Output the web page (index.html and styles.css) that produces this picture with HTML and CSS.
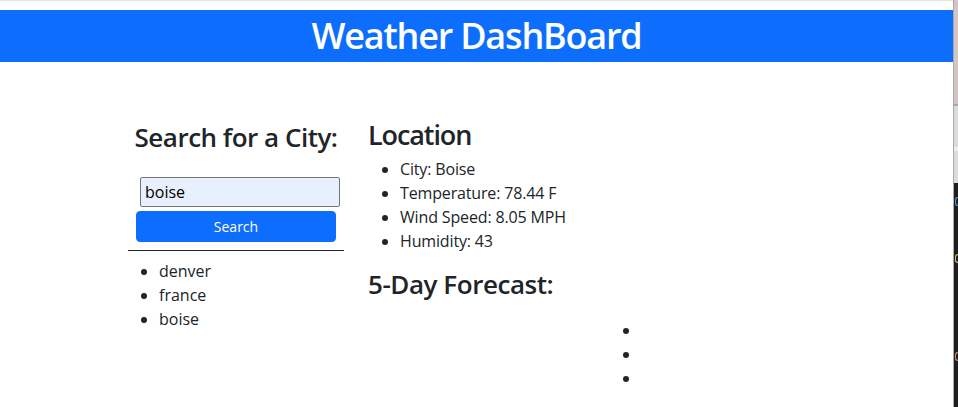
FILE: index.html
```html
<!DOCTYPE html>
<html lang="en">
<head>
<meta charset="utf-8">
<title>Weather DashBoard</title>
<link rel="stylesheet" href="styles.css">
</head>
<body>
<div class="page">
  <header class="banner">
    <h1 class="banner-title">Weather DashBoard</h1>
  </header>
  <main class="container">
    <section class="search-col">
      <h3 class="search-title">Search for a City:</h3>
      <input class="city-input" type="text" value="boise">
      <button class="search-btn" type="button">Search</button>
      <hr class="divider">
      <ul class="history">
        <li>denver</li>
        <li>france</li>
        <li>boise</li>
      </ul>
    </section>
    <section class="weather-col">
      <h2 class="loc-title">Location</h2>
      <ul class="details">
        <li>City: Boise</li>
        <li>Temperature: 78.44 F</li>
        <li>Wind Speed: 8.05 MPH</li>
        <li>Humidity: 43</li>
      </ul>
      <h3 class="forecast-title">5-Day Forecast:</h3>
      <ul class="forecast">
        <li></li>
        <li></li>
        <li></li>
      </ul>
    </section>
  </main>
</div>
<div class="strip">
  <span class="strip-mark m1"></span>
  <span class="strip-mark m2"></span>
  <span class="strip-mark m3"></span>
</div>
</body>
</html>
```
FILE: styles.css
```css
html, body {
  margin: 0;
  padding: 0;
  height: 100%;
}
body {
  display: flex;
  background: #fff;
  color: #212529;
  font-family: "Open Sans", "Noto Sans", sans-serif;
  font-size: 16px;
  line-height: 24px;
  overflow: hidden;
}
.page {
  flex: 1;
  min-width: 0;
  border-top: 1px solid #e2e2e2;
  padding-top: 9px;
}
.banner {
  background: #0d6efd;
  height: 52px;
  display: flex;
  align-items: center;
  justify-content: center;
}
.banner-title {
  margin: 0;
  color: #fff;
  font-size: 36px;
  font-weight: 600;
  line-height: 52px;
  letter-spacing: -1.2px;
}
.container {
  display: flex;
  gap: 25px;
  padding: 56px 0 0 128px;
}
.search-col {
  width: 216px;
  display: flex;
  flex-direction: column;
  align-items: center;
}
.search-title {
  margin: 3px 0 24px;
  font-size: 26px;
  font-weight: 600;
  line-height: 32px;
  letter-spacing: -0.5px;
  white-space: nowrap;
}
.city-input {
  box-sizing: border-box;
  width: 200px;
  height: 30px;
  margin: 0 0 0 8px;
  padding: 1px 4px;
  border: 1px solid #767676;
  border-radius: 2px;
  background: #e8f0fe;
  font-family: inherit;
  font-size: 16px;
  color: #000;
  outline: none;
}
.search-btn {
  box-sizing: border-box;
  width: 200px;
  height: 31px;
  margin-top: 4px;
  border: 1px solid #0d6efd;
  border-radius: 4px;
  background: #0d6efd;
  color: #fff;
  font-family: inherit;
  font-size: 14px;
  line-height: 21px;
  padding: 4px 8px;
}
.divider {
  align-self: stretch;
  margin: 8px 0 0;
  border: 0;
  border-top: 1px solid #212529;
  height: 0;
}
.history {
  align-self: stretch;
  margin: 8px 0 0;
  padding-left: 31px;
}
.weather-col {
  flex: 1;
}
.loc-title {
  margin: 0 0 5px -1px;
  font-size: 27px;
  font-weight: 600;
  line-height: 34px;
  letter-spacing: -1.1px;
}
.details {
  margin: 0;
  padding-left: 31px;
  letter-spacing: -0.15px;
}
.forecast-title {
  margin: 15px 0 0 -1px;
  font-size: 26px;
  font-weight: 600;
  line-height: 32px;
  letter-spacing: -0.45px;
}
.forecast {
  margin: 18px 0 0 240px;
  padding-left: 32px;
}
.forecast li {
  height: 24px;
}
.strip {
  position: relative;
  width: 5px;
  flex: none;
  border-left: 1px solid #a9a9a9;
  box-sizing: border-box;
  background: linear-gradient(to bottom,
    #d3c5c5 0, #d3c5c5 104px,
    #a8a8a8 104px, #a8a8a8 106px,
    #dcdcde 106px, #dcdcde 147px,
    #eeeeee 147px, #eeeeee 151px,
    #dcdcde 151px, #dcdcde 183px,
    #1e1e1e 183px, #1e1e1e 100%);
  overflow: hidden;
}
.strip-mark {
  position: absolute;
  left: 1px;
  width: 3px;
  height: 7px;
  border: 1px solid currentColor;
  border-right: 0;
  border-radius: 3px 0 0 3px;
}
.m1 { top: 197px; color: #569cd6; }
.m2 { top: 254px; color: #d7ba7d; }
.m3 { top: 352px; color: #ce9178; }
```
